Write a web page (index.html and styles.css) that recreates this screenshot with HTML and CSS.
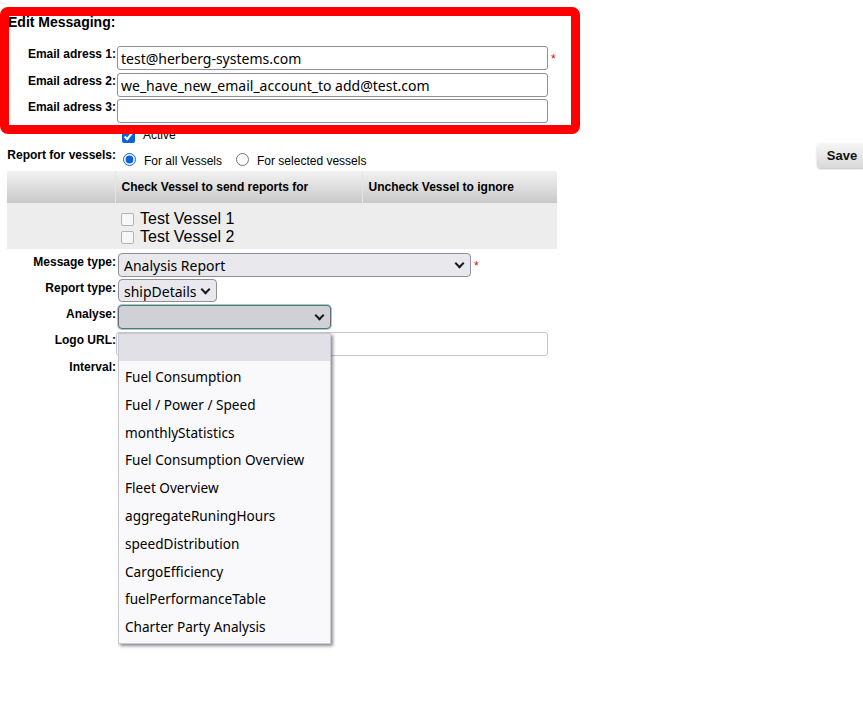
FILE: index.html
```html
<!DOCTYPE html>
<html lang="en">
<head>
  <meta charset="UTF-8">
  <title>Edit Messaging</title>
  <link rel="stylesheet" href="styles.css">
</head>
<body>

  <div class="page">
    <h3 class="title">Edit Messaging:</h3>

    <!-- EMAILS -->
    <div class="row r-mail1">
      <label class="lbl">Email adress 1:</label>
      <input class="txt" type="text" value="test@herberg-systems.com">
      <span class="req">*</span>
    </div>
    <div class="row r-mail2">
      <label class="lbl">Email adress 2:</label>
      <input class="txt" type="text" value="we_have_new_email_account_to add@test.com">
    </div>
    <div class="row r-mail3">
      <label class="lbl">Email adress 3:</label>
      <input class="txt" type="text" value="">
    </div>

    <div class="row r-active">
      <span class="lbl"></span>
      <label class="opt"><input type="checkbox" checked> Active</label>
    </div>

    <div class="row r-report">
      <span class="lbl">Report for vessels:</span>
      <label class="opt"><input type="radio" name="rv" checked> For all Vessels</label>
      <label class="opt"><input type="radio" name="rv"> For selected vessels</label>
      <button class="save">Save</button>
    </div>

    <!-- VESSELS -->
    <table class="vessels">
      <thead>
        <tr>
          <th class="c1"></th>
          <th class="c2">Check Vessel to send reports for</th>
          <th class="c3">Uncheck Vessel to ignore</th>
        </tr>
      </thead>
      <tbody>
        <tr>
          <td></td>
          <td class="list">
            <label class="vessel"><input type="checkbox"> Test Vessel 1</label>
            <label class="vessel"><input type="checkbox"> Test Vessel 2</label>
          </td>
          <td></td>
        </tr>
      </tbody>
    </table>

    <div class="row r-msg">
      <span class="lbl">Message type:</span>
      <div class="sel sel-msg">Analysis Report <span class="chev"></span></div>
      <span class="req">*</span>
    </div>
    <div class="row r-rtype">
      <span class="lbl">Report type:</span>
      <div class="sel sel-rtype">shipDetails <span class="chev"></span></div>
    </div>
    <div class="row r-analyse">
      <span class="lbl">Analyse:</span>
      <div class="field">
        <div class="sel sel-analyse focus"><span class="chev"></span></div>
        <ul class="popup">
          <li class="hl">&nbsp;</li>
          <li>Fuel Consumption</li>
          <li>Fuel / Power / Speed</li>
          <li>monthlyStatistics</li>
          <li>Fuel Consumption Overview</li>
          <li>Fleet Overview</li>
          <li>aggregateRuningHours</li>
          <li>speedDistribution</li>
          <li>CargoEfficiency</li>
          <li>fuelPerformanceTable</li>
          <li>Charter Party Analysis</li>
        </ul>
      </div>
    </div>
    <div class="row r-logo">
      <span class="lbl">Logo URL:</span>
      <input class="txt txt-logo" type="text" value="">
    </div>
    <div class="row r-interval">
      <span class="lbl">Interval:</span>
    </div>

    <!-- highlight frame -->
    <div class="mark"></div>
  </div>

</body>
</html>
```

FILE: styles.css
```css
* { box-sizing: border-box; }
body { margin: 0; font-family: 'Liberation Sans', Arial, sans-serif; font-size: 12px; color: #000; background: #fff; }

.page { position: relative; width: 863px; height: 704px; overflow: hidden; }

.title { margin: 0 0 16px 8px; padding-top: 14px; font-size: 14px; line-height: 16px; font-weight: bold; }

/* ROWS */
.row { display: flex; align-items: flex-start; }
.lbl { width: 116px; flex: none; text-align: right; font-weight: bold; padding-top: 1px; padding-right: 0; }
.r-mail1 { margin-bottom: 3px; }
.r-mail2 { margin-bottom: 2px; }
.r-active { margin-top: 4px; height: 16px; }
.r-report { height: 25px; align-items: flex-end; }
.r-report .lbl { padding-top: 0; margin-bottom: 6px; }

.txt {
  width: 431px; height: 24px; margin: 0 0 0 1px; padding: 0 3px;
  border: 1px solid #8f8f9d; border-radius: 3px;
  font-family: 'Noto Sans', sans-serif; font-size: 14px; color: #000;
}
.txt-logo { border-color: #c6c6cc; }
.req { color: #e00; font-size: 12px; margin-left: 3px; padding-top: 6px; }

.opt { display: flex; align-items: center; margin-right: 7px; }
.opt input { margin: 3px 8px 3px 7px; width: 13px; height: 13px; accent-color: #0a64d8; }
.r-report .opt { margin-bottom: 0; }
.r-report .opt input { margin-bottom: 2px; margin-top: 0; }
.r-report .opt { padding-bottom: 0; }
.r-active .opt input { margin: 3px 8px 0 6px; }

.save {
  align-self: flex-start;
  margin-left: auto; margin-right: -4px; width: 50px; height: 25px;
  border: none; border-radius: 4px;
  background: linear-gradient(#f6f6f6, #d9d9d9);
  box-shadow: 0 1px 2px rgba(0,0,0,0.25);
  font-family: 'Liberation Sans', Arial, sans-serif; font-size: 13px; font-weight: bold; color: #111;
}

/* VESSEL TABLE */
.vessels { margin: 3px 0 0 7px; width: 550px; border-collapse: collapse; }
.vessels th {
  height: 32px; padding: 0 6px; text-align: left; font-size: 12px;
  background: linear-gradient(#f2f2f2, #c9c9c9);
  border-left: 1px solid #e4e4e4;
}
.vessels th.c1 { width: 108px; border-left: none; }
.vessels th.c2 { width: 247px; }
.vessels td { background: #ededed; height: 46px; padding: 0; vertical-align: top; }
.vessels td.list { padding: 7px 0 0 4px; }
.vessel { display: flex; align-items: center; font-size: 16px; line-height: 18px; }
.vessel input {
  appearance: none; margin: 0 6px 0 2px; width: 13px; height: 13px;
  border: 1.5px solid #b3b3b3; border-radius: 2px; background: #f7f7f7;
}

/* SELECTS */
.r-msg { margin-top: 4px; margin-bottom: 2px; }
.r-rtype { margin-bottom: 3px; }
.r-analyse { margin-bottom: 3px; }
.r-msg .lbl, .r-rtype .lbl, .r-analyse .lbl { padding-top: 2px; }

.sel {
  position: relative; height: 24px; margin-left: 2px; padding: 2px 24px 0 5px;
  border: 1px solid #8f8f9d; border-radius: 4px; background: #e9e9ed;
  font-family: 'Noto Sans', sans-serif; font-size: 14px; line-height: 19px;
}
.sel-msg { width: 353px; }
.sel-rtype { width: 99px; height: 23px; }
.sel-analyse { width: 213px; margin-left: 0; background: #d0d0d7; }
.focus { box-shadow: 0 0 0 1px #8fd3c9; border-color: #6b6b76; }
.chev {
  position: absolute; right: 7px; top: 6px; width: 7px; height: 7px;
  border-right: 2px solid #1a1a1a; border-bottom: 2px solid #1a1a1a;
  transform: rotate(45deg);
}

.field { position: relative; margin-left: 2px; }
.popup {
  position: absolute; left: 0; top: 28px; width: 213px; height: 311px;
  margin: 0; padding: 0; list-style: none; z-index: 2;
  background: #f9f9fb; border: 1px solid #c9c9cf;
  box-shadow: 2px 2px 3px rgba(0,0,0,0.45);
  font-family: 'Noto Sans', sans-serif; font-size: 13.6px;
}
.popup li { height: 27.8px; line-height: 27.8px; padding: 2px 0 0 6px; white-space: nowrap; }
.popup li.hl { background: #e0e0e6; height: 27px; }

.r-logo { margin-bottom: 3px; }
.r-logo .txt { width: 432px; margin-left: 0; }
.r-interval .lbl { padding-top: 1px; }

/* RED ANNOTATION FRAME */
.mark {
  position: absolute; left: 0; top: 7px; width: 580px; height: 127px;
  border: 9px solid #ff0000; border-radius: 8px; pointer-events: none; z-index: 3;
}
```
